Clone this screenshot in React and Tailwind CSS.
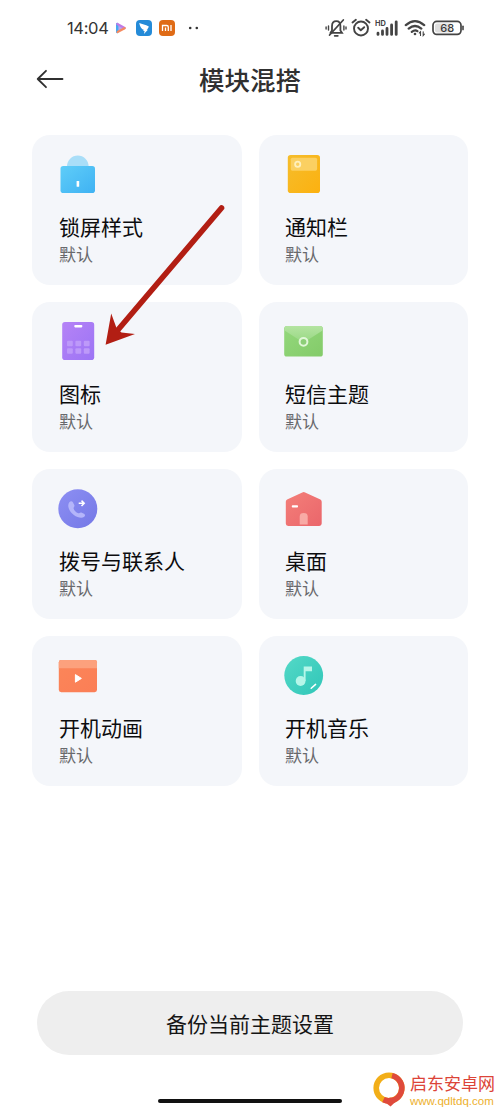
import React from "react";

const iconClass = "block h-10 w-10";

function Gradient({ id, from, to }) {
  return (
    <defs>
      <linearGradient id={id} x1="0" y1="0" x2="1" y2="1">
        <stop offset="0" stopColor={from} />
        <stop offset="1" stopColor={to} />
      </linearGradient>
    </defs>
  );
}

function LockIcon() {
  return (
    <svg viewBox="0 0 40 40" className={iconClass}>
      <Gradient id="lock" from="#5fcdf8" to="#3fb2f3" />
      <circle cx="19.8" cy="11.3" r="10.8" fill="#a9def8" />
      <rect x="2.5" y="11" width="34.5" height="27" rx="2.8" fill="url(#lock)" />
      <rect x="18.6" y="26" width="2.6" height="5.8" rx="0.6" fill="#fff" />
    </svg>
  );
}

function NotificationIcon() {
  return (
    <svg viewBox="0 0 40 40" className={iconClass}>
      <Gradient id="note" from="#f5bd2c" to="#fcb110" />
      <rect x="3.8" y="0" width="32.2" height="38" rx="2.8" fill="url(#note)" />
      <rect x="6.8" y="2.7" width="26.3" height="13" rx="1.6" fill="#fbd062" />
      <circle cx="13.7" cy="9.3" r="2.6" fill="none" stroke="#fff0bd" strokeWidth="1.8" />
    </svg>
  );
}

function AppsIcon() {
  return (
    <svg viewBox="0 0 40 40" className={iconClass}>
      <Gradient id="apps" from="#b583f6" to="#9c74f5" />
      <rect x="4.2" y="0" width="32" height="38" rx="2.8" fill="url(#apps)" />
      <rect x="16.3" y="3" width="8" height="2.4" rx="0.8" fill="#fff" />
      <g fill="#bd99f9">
        <rect x="9" y="18.7" width="5.8" height="5.6" rx="1" />
        <rect x="17.4" y="18.7" width="5.8" height="5.6" rx="1" />
        <rect x="25.8" y="18.7" width="5.8" height="5.6" rx="1" />
        <rect x="9" y="26.2" width="5.8" height="5.6" rx="1" />
        <rect x="17.4" y="26.2" width="5.8" height="5.6" rx="1" />
        <rect x="25.8" y="26.2" width="5.8" height="5.6" rx="1" />
      </g>
    </svg>
  );
}

function MessageIcon() {
  return (
    <svg viewBox="0 0 40 40" className={iconClass}>
      <Gradient id="mail" from="#94d87c" to="#83cb69" />
      <defs>
        <linearGradient id="flap" x1="0" y1="0" x2="0" y2="1">
          <stop offset="0" stopColor="#b4e4a1" />
          <stop offset="1" stopColor="#98d883" />
        </linearGradient>
      </defs>
      <rect x="0.2" y="4" width="38.6" height="30.6" rx="2.6" fill="url(#mail)" />
      <path d="M0.6 8.6V6.6Q0.6 4 3 4H36Q38.6 4 38.6 6.6V8.6L21 19.8Q19.5 20.7 18 19.8Z" fill="url(#flap)" />
      <circle cx="19.5" cy="19.8" r="3.9" fill="#8dcf78" stroke="#e0f7d7" strokeWidth="2" />
    </svg>
  );
}

function PhoneIcon() {
  return (
    <svg viewBox="0 0 40 40" className={iconClass}>
      <Gradient id="phone" from="#8d8ff3" to="#7478e6" />
      <circle cx="19.8" cy="19.8" r="19.5" fill="url(#phone)" />
      <path
        d="M11.3 13.2C12.4 11.8 14.1 11.8 14.9 13.3L16.3 16.1C16.9 17.4 15.4 18.3 15.6 19.4C16 21.3 18.1 23.5 20.2 24.2C21.3 24.5 22 23 23.3 23.5L26 24.8C27.6 25.6 27.2 27.2 25.9 28C21.9 30.5 11.8 25.7 10.4 18C10 15.8 10.4 14.4 11.3 13.2Z"
        fill="#b4b5fa"
      />
      <path d="M20.7 14.3H26M23.5 11.6L26.2 14.3L23.5 17" fill="none" stroke="#fff" strokeWidth="1.5" />
    </svg>
  );
}

function HomeIcon() {
  return (
    <svg viewBox="0 0 40 40" className={iconClass}>
      <Gradient id="home" from="#f47f79" to="#ea666b" />
      <path
        d="M18.3 3.4Q19.7 2.5 21.1 3.4L36.4 10.5Q37.7 11.2 37.7 12.7V34.6Q37.7 37 35.2 37H4.2Q1.8 37 1.8 34.6V12.7Q1.8 11.2 3.1 10.5Z"
        fill="url(#home)"
      />
      <rect x="7.8" y="16.2" width="6.2" height="2.3" rx="0.8" fill="#fff" />
      <path d="M15.7 35.6V27.4Q15.7 24 19.7 24Q23.7 24 23.7 27.4V35.6Z" fill="#f8aaa5" />
    </svg>
  );
}

function VideoIcon() {
  return (
    <svg viewBox="0 0 40 40" className={iconClass}>
      <Gradient id="video" from="#fb8659" to="#fb7e56" />
      <rect x="0.8" y="4" width="38.2" height="32.2" rx="2.4" fill="url(#video)" />
      <path d="M0.8 12.3V6.4Q0.8 4 3.2 4H36.6Q39 4 39 6.4V12.3Z" fill="#fca17d" />
      <path d="M17.4 18.6L23.4 22.4L17.4 26.2Z" fill="#fff" stroke="#fff" strokeLinejoin="round" strokeWidth="1" />
    </svg>
  );
}

function MusicIcon() {
  return (
    <svg viewBox="0 0 40 40" className={iconClass}>
      <Gradient id="music" from="#54d9c7" to="#30c6b8" />
      <circle cx="19.7" cy="19.5" r="19.4" fill="url(#music)" />
      <circle cx="16.6" cy="25" r="4.9" fill="#b5f6e9" />
      <path d="M19.7 25V10.6H28V15.2H21.6V25Z" fill="#b5f6e9" />
      <path d="M27.2 32.3L31.6 28.4" stroke="#fff" strokeLinecap="round" strokeWidth="1.5" />
    </svg>
  );
}

const modules = [
  { title: "锁屏样式", Icon: LockIcon },
  { title: "通知栏", Icon: NotificationIcon },
  { title: "图标", Icon: AppsIcon },
  { title: "短信主题", Icon: MessageIcon },
  { title: "拨号与联系人", Icon: PhoneIcon },
  { title: "桌面", Icon: HomeIcon },
  { title: "开机动画", Icon: VideoIcon },
  { title: "开机音乐", Icon: MusicIcon },
];

function ModuleCard({ title, Icon }) {
  return (
    <div className="flex h-[150px] flex-col rounded-[18px] bg-[#f4f6fa] pt-5 pl-[25.5px]">
      <Icon />
      <div className="mt-4 pl-px text-[21px] leading-[30px] text-[#0c0c0e]">{title}</div>
      <div className="mt-px pl-px text-[17px] leading-6 text-[#68696d]">默认</div>
    </div>
  );
}

function StatusBar() {
  return (
    <div className="flex h-14 items-center justify-between pr-9 pl-[67px]">
      <div className="flex items-center">
        <span className="w-[42px] font-[Inter,sans-serif] text-[16.5px] leading-6 tracking-[-0.35px] text-[#343434]">14:04</span>
        <svg viewBox="0 0 14 16" className="ml-[5px] h-4 w-3.5">
          <path d="M3.4 4.2V11.8L10.4 8Z" fill="#b9a4ee" />
          <path d="M3.2 4V12" stroke="#45aaf0" strokeWidth="2.4" strokeLinecap="round" />
          <path d="M3.4 4L10.6 8" stroke="#c07be6" strokeWidth="2.4" strokeLinecap="round" />
          <path d="M3.6 12L10.6 8.2" stroke="#f58a60" strokeWidth="2.2" strokeLinecap="round" />
        </svg>
        <svg viewBox="0 0 16 16" className="ml-2 h-4 w-4">
          <rect width="16" height="16" rx="4" fill="#258bd8" />
          <path d="M3.2 3.1C6 4.4 9.6 4.9 12.8 6.4C12.5 7.8 11.4 9 10.6 9.8H11.9L7.9 14L8.6 11.1H7.2L7.8 9.8C5.4 9.4 4 6.4 3.2 3.1Z" fill="#fff" />
        </svg>
        <svg viewBox="0 0 16 16" className="ml-[7px] h-4 w-4">
          <rect width="16" height="16" rx="4" fill="#df6b16" />
          <path d="M3.5 11V5.5H7.7Q9.3 5.5 9.3 7V11M6.5 7.6V11M12 5V11" fill="none" stroke="#fff" strokeWidth="1.3" />
        </svg>
        <svg viewBox="0 0 12 4" className="ml-[13px] h-1 w-3">
          <circle cx="2.2" cy="2" r="1.3" fill="#333" />
          <circle cx="8.8" cy="2" r="1.3" fill="#333" />
        </svg>
      </div>
      <div className="flex items-center">
        <svg viewBox="0 0 22 20" className="h-5 w-[22px]" fill="none" stroke="#444" strokeWidth="1.8" strokeLinecap="round">
          <path d="M5.5 14.7L7 12.4V8.2C7 5 8.8 3.2 11.3 3.2C13.9 3.2 15.4 5 15.4 8.2V12.4L17 14.8H5.5ZM9.7 17.8H12.8" />
          <path d="M4.6 17L18.3 2" />
          <path d="M3.5 8V12M1.1 9V11M18.9 8V12M21 9V11" strokeWidth="1.4" />
        </svg>
        <svg viewBox="0 0 20 20" className="ml-1 h-5 w-5" fill="none" stroke="#444" strokeWidth="1.9" strokeLinecap="round" strokeLinejoin="round">
          <circle cx="10" cy="10.5" r="7" />
          <path d="M7.2 9.7L9.8 12.2L13.2 9.2M1.5 4.5L4.9 1.8M18.5 4.5L15.1 1.8" />
        </svg>
        <svg viewBox="0 0 24 20" className="ml-1 h-5 w-6">
          <text x="0" y="7.6" fill="#444" fontSize="7.4" fontWeight="700" fontFamily="Inter, sans-serif">HD</text>
          <path d="M3 15.2V16.4M7.5 13V16.4M12 10.4V16.4M16.6 7V16.4M21.2 3.8V16.4" stroke="#444" strokeWidth="2.8" strokeLinecap="round" />
        </svg>
        <svg viewBox="0 0 22 20" className="ml-[5px] h-5 w-[22px]" fill="none" stroke="#444" strokeWidth="2.3" strokeLinecap="round">
          <path d="M1.8 7.1Q11 -0.8 20.2 7.1M4.7 10.6Q11 5.4 17.3 10.6M7.8 13.8Q11 11.4 13.4 13.1" />
          <circle cx="11" cy="16" r="1.3" fill="#444" stroke="none" />
          <path d="M16.5 17.5V13.8L15.3 15M19.2 13.8V17.5L20.4 16.2" strokeWidth="1.1" />
        </svg>
        <svg viewBox="0 0 32 20" className="ml-1.5 h-5 w-8">
          <rect x="1" y="3.4" width="28" height="13" rx="3.8" fill="#fff" stroke="#444" strokeWidth="1.7" />
          <path d="M5.2 5.4H19V14.4H5.2Q3 14.4 3 12.2V7.6Q3 5.4 5.2 5.4Z" fill="#dedede" />
          <path d="M31 8.3V11.6" stroke="#444" strokeWidth="1.6" strokeLinecap="round" />
          <text x="15.2" y="13.9" textAnchor="middle" fill="#3a3a3a" fontSize="11" fontWeight="500" fontFamily="Inter, sans-serif">68</text>
        </svg>
      </div>
    </div>
  );
}

function PointerArrow() {
  return (
    <svg viewBox="0 0 124 146" className="pointer-events-none absolute top-[202px] left-[103px] h-[146px] w-[124px]">
      <path d="M118.5 6L14 129" stroke="#b21e13" strokeWidth="5.6" strokeLinecap="round" />
      <path d="M2.6 142.7L8.2 111.5L13.6 126.2L18.5 130.4L32 132Z" fill="#b21e13" />
    </svg>
  );
}

function SiteMark() {
  return (
    <div className="absolute right-[5px] bottom-[3px] flex items-center">
      <svg viewBox="0 0 36 38" className="h-[38px] w-9">
        <circle cx="17" cy="18" r="12.8" fill="none" stroke="#f2ae18" strokeWidth="5.6" />
        <path d="M20 5.6A12.8 12.8 0 1 1 11.5 29.6" fill="none" stroke="#df4a3c" strokeWidth="5.6" />
        <path d="M11.5 31L18.5 36.5L25 30.5L18 27.5Z" fill="#df4a3c" />
      </svg>
      <div className="ml-0.5 flex w-[85px] flex-col whitespace-nowrap">
        <span className="text-[17px] leading-[25px] text-[#dc4438]">启东安卓网</span>
        <span className="font-['Liberation_Sans',sans-serif] text-[11.5px] leading-[13px] text-[#edb02d]">www.qdltdq.com</span>
      </div>
    </div>
  );
}

export default function App() {
  return (
    <div className="relative flex h-[1111px] w-[500px] flex-col overflow-hidden bg-white font-['Noto_Sans_CJK_SC',sans-serif]">
      <StatusBar />
      <header className="grid h-[46px] grid-cols-[1fr_auto_1fr] items-center pl-9">
        <svg viewBox="0 0 28 20" className="h-5 w-7" fill="none" stroke="#303030" strokeWidth="1.8" strokeLinecap="round" strokeLinejoin="round">
          <path d="M10 1.8L1.7 10L10 18.2M1.7 10H26.5" />
        </svg>
        <h1 className="-ml-9 text-[25.5px] leading-9 font-medium text-[#303030]">模块混搭</h1>
      </header>
      <main className="mt-[32.7px] grid grid-cols-2 gap-[17px] px-[32.4px]">
        {modules.map((item) => (
          <ModuleCard key={item.title} {...item} />
        ))}
      </main>
      <footer className="mt-auto flex flex-col items-center pb-2">
        <button className="h-16 w-[426px] rounded-full bg-[#eeeeee] pt-0.5 text-[21px] text-[#151515]">备份当前主题设置</button>
        <div className="mt-11 h-1 w-[184px] rounded-full bg-[#111]" />
      </footer>
      <PointerArrow />
      <SiteMark />
    </div>
  );
}
